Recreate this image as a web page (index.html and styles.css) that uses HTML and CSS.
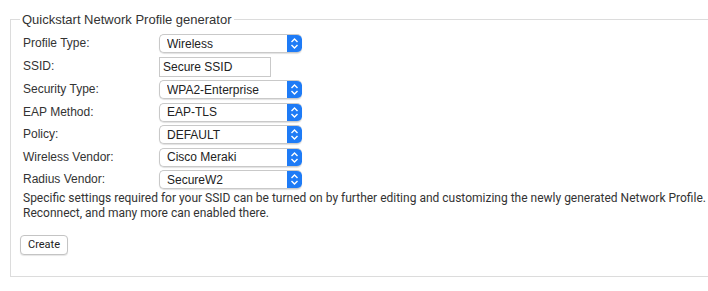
FILE: index.html
```html
<!DOCTYPE html>
<html>
<head>
    <title>Quickstart Network Profile generator</title>
    <link rel="stylesheet" href="styles.css">
</head>
<body>
    <fieldset class="quickstart">
        <legend>Quickstart Network Profile generator</legend>
        <div class="form-rows">
            <div class="row">
                <label>Profile Type:</label>
                <span class="select-box">
                    <select><option>Wireless</option></select>
                    <span class="stepper"><svg width="15" height="19" viewBox="0 0 15 19"><path d="M4.5 8 L7.5 5 L10.5 8 M4.5 11 L7.5 14 L10.5 11" fill="none" stroke="#fff" stroke-width="1.4"/></svg></span>
                </span>
            </div>
            <div class="row">
                <label>SSID:</label>
                <input class="text-input" type="text" value="Secure SSID">
            </div>
            <div class="row">
                <label>Security Type:</label>
                <span class="select-box">
                    <select><option>WPA2-Enterprise</option></select>
                    <span class="stepper"><svg width="15" height="19" viewBox="0 0 15 19"><path d="M4.5 8 L7.5 5 L10.5 8 M4.5 11 L7.5 14 L10.5 11" fill="none" stroke="#fff" stroke-width="1.4"/></svg></span>
                </span>
            </div>
            <div class="row">
                <label>EAP Method:</label>
                <span class="select-box">
                    <select><option>EAP-TLS</option></select>
                    <span class="stepper"><svg width="15" height="19" viewBox="0 0 15 19"><path d="M4.5 8 L7.5 5 L10.5 8 M4.5 11 L7.5 14 L10.5 11" fill="none" stroke="#fff" stroke-width="1.4"/></svg></span>
                </span>
            </div>
            <div class="row">
                <label>Policy:</label>
                <span class="select-box">
                    <select><option>DEFAULT</option></select>
                    <span class="stepper"><svg width="15" height="19" viewBox="0 0 15 19"><path d="M4.5 8 L7.5 5 L10.5 8 M4.5 11 L7.5 14 L10.5 11" fill="none" stroke="#fff" stroke-width="1.4"/></svg></span>
                </span>
            </div>
            <div class="row">
                <label>Wireless Vendor:</label>
                <span class="select-box">
                    <select><option>Cisco Meraki</option></select>
                    <span class="stepper"><svg width="15" height="19" viewBox="0 0 15 19"><path d="M4.5 8 L7.5 5 L10.5 8 M4.5 11 L7.5 14 L10.5 11" fill="none" stroke="#fff" stroke-width="1.4"/></svg></span>
                </span>
            </div>
            <div class="row">
                <label>Radius Vendor:</label>
                <span class="select-box">
                    <select><option>SecureW2</option></select>
                    <span class="stepper"><svg width="15" height="19" viewBox="0 0 15 19"><path d="M4.5 8 L7.5 5 L10.5 8 M4.5 11 L7.5 14 L10.5 11" fill="none" stroke="#fff" stroke-width="1.4"/></svg></span>
                </span>
            </div>
        </div>
        <p class="note">Specific settings required for your SSID can be turned on by further editing and customizing the newly generated Network Profile.<br>Reconnect, and many more can enabled there.</p>
        <button class="button">Create</button>
    </fieldset>
</body>
</html>
```

FILE: styles.css
```css
body {
    margin: 0;
    padding: 12px 0 0 10px;
    font-family: "Liberation Sans", Arial, sans-serif;
    color: #333;
    background-color: #fff;
    overflow: hidden;
}

/* Outer group box, its right edge runs off the page */
.quickstart {
    margin: 0;
    border: 1px solid #dcdcdc;
    border-right: none;
    padding: 7px 0 21px 12px;
    min-width: 0;
}

.quickstart legend {
    font-size: 13px;
    color: #333;
    padding: 0 2px;
    margin-left: -3px;
}

.form-rows {
    display: flex;
    flex-direction: column;
    gap: 3.5px;
}

.row {
    display: flex;
    align-items: center;
}

.row label {
    width: 136px;
    font-size: 12px;
    color: #333;
    margin-top: -1px;
}

/* Select with the blue stepper */
.select-box {
    display: flex;
    width: 143px;
    height: 19px;
    box-sizing: border-box;
    border: 1px solid #c9c9c9;
    border-right: none;
    border-radius: 5px;
    box-shadow: 0 1px 1px rgba(0, 0, 0, 0.12);
    overflow: hidden;
    background-color: #fff;
}

.select-box select {
    flex: 1;
    appearance: none;
    -webkit-appearance: none;
    border: none;
    background: transparent;
    font-family: "Liberation Sans", Arial, sans-serif;
    font-size: 12px;
    color: #222;
    padding: 0 0 0 7px;
    margin: 0;
    outline: none;
}

.stepper {
    display: flex;
    width: 15px;
    margin: -1px 0;
    background-color: #1e7bf6;
    border-radius: 0 5px 5px 0;
}

.text-input {
    width: 112px;
    height: 20px;
    box-sizing: border-box;
    border: 1px solid #c9c9c9;
    font-family: "Liberation Sans", Arial, sans-serif;
    font-size: 12px;
    color: #222;
    padding: 0 3px;
    margin: 0;
}

.note {
    font-family: Roboto, sans-serif;
    font-size: 12px;
    line-height: 15px;
    color: #333;
    white-space: nowrap;
    margin: 2px 0 13px 0;
}

.button {
    font-family: Roboto, sans-serif;
    font-size: 11px;
    color: #222;
    background-color: #fff;
    border: 1px solid #c4c4c4;
    border-radius: 4px;
    height: 20px;
    width: 48px;
    padding: 0;
    margin-left: -3px;
    box-shadow: 0 1px 1px rgba(0, 0, 0, 0.1);
}
```
